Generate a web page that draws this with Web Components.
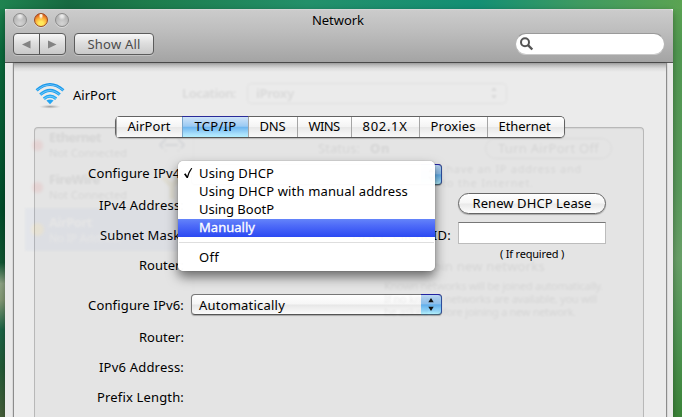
<!DOCTYPE html>
<html lang="en">
<head>
<meta charset="utf-8">
<title>Network</title>
<style>
html,body{margin:0;height:100%;overflow:hidden}
body{font:13px/18px "Noto Sans","Open Sans",sans-serif;color:#000}
</style>
</head>
<body>
<network-window></network-window>
<script>
const define=(name,html,setup)=>customElements.define(name,class extends HTMLElement{
  constructor(){super();const t=document.createElement('template');t.innerHTML=html;
    this.attachShadow({mode:'open'}).appendChild(t.content.cloneNode(true));}
  connectedCallback(){if(setup)setup(this,this.shadowRoot);}
});

/* Text run whose tracking is adjusted so that it fills the width w */
define('fit-text',`<style>:host{display:inline-block;white-space:pre;flex:none}span{display:inline-block}</style><span><slot></slot></span>`,(el,r)=>{
  const w=+el.getAttribute('w'),s=r.querySelector('span');
  el.style.width=w+'px';
  const nat=s.getBoundingClientRect().width,n=el.textContent.length;
  if(nat)s.style.letterSpacing=((w-nat)/n)+'px';
});

define('traffic-light',`<style>
:host{display:block;box-sizing:border-box;width:14px;height:14px;border-radius:50%;border:1px solid #8c8c8c;
background:radial-gradient(circle at 50% 18%,#e8e8e8 0 10%,transparent 35%),radial-gradient(circle at 50% 80%,#d4d4d4,#b2b2b2 75%);box-shadow:0 1px 0 #d8d8d8}
:host([on]){border-color:#9c4a20;background:radial-gradient(ellipse at 50% 12%,#fff3d5 0 10%,transparent 26%),radial-gradient(circle at 50% 80%,#ffe95c 0 18%,#fbb13a 50%,#d9521a 85%)}
</style>`);

define('tool-button',`<style>
:host{display:flex;box-sizing:border-box;height:22px;border:1px solid #5c5c5c;border-radius:4px;background:linear-gradient(#f7f7f7,#dedede 45%,#c9c9c9);box-shadow:0 1px 0 #c3c3c3;color:#4b4b4b;align-items:center;justify-content:center}
</style><slot></slot>`);

define('search-field',`<style>
:host{display:flex;align-items:center;box-sizing:border-box;width:150px;height:22px;border-radius:11px;background:#fff;border:1px solid #b4b4b4;border-top-color:#9a9a9a;border-bottom-color:#c9c9c9;padding-left:4px}
svg{display:block}</style><svg width="14" height="14" viewBox="0 0 14 14" fill="none" stroke="#555" stroke-width="2"><circle cx="5" cy="5.2" r="4"/><path d="M8 8.2L12.3 12.5" stroke-width="2.4"/></svg>`);

define('title-bar',`<style>
:host{display:block;box-sizing:border-box;height:54px;border-bottom:1px solid #555;border-radius:4px 4px 0 0;background:linear-gradient(#dadada,#cbcbcb 3%,#bebebe 40%,#a4a4a4);padding:0 8px}
.t{display:grid;grid-template-columns:80px 1fr 80px;height:22px;margin-bottom:2px;align-items:center}
.l{display:flex;gap:7px}
.n{text-align:center;text-shadow:0 1px 0 #ddd8;padding-right:2px}
.b{display:flex;height:22px}
.seg{width:53px}
.seg i{width:1px;height:20px;background:#555}
.seg b{flex:1;display:flex;justify-content:center}
.show{width:80px;margin-left:8px}
search-field{margin-left:auto}
</style>
<div class="t"><div class="l"><traffic-light></traffic-light><traffic-light on></traffic-light><traffic-light></traffic-light></div>
<div class="n"><fit-text w="52">Network</fit-text></div></div>
<div class="b"><tool-button class="seg"><b><svg width="9" height="9"><path d="M0 4.5L8.5 .5V8.5Z" fill="#838383"/></svg></b><i></i><b><svg width="9" height="9"><path d="M8.5 4.5L0 .5V8.5Z" fill="#838383"/></svg></b></tool-button>
<tool-button class="show"><fit-text w="53">Show All</fit-text></tool-button><search-field></search-field></div>`);

define('tab-item',`<style>
:host{display:flex;box-sizing:border-box;align-items:center;justify-content:center;border-left:1px solid #a5a5a5;height:20px;padding:0 1px 2px 0;background:linear-gradient(#fff,#f4f4f4 48%,#e8e8e8 52%,#f9f9f9)}
:host(:first-child){border-left:0;padding-right:0}
:host(:last-child){padding-right:3px}
:host([on]){border-left-color:#79a5ca;padding-right:0;background:linear-gradient(#cfe3f8,#9bcaf3 46%,#6fb6ef 52%,#a9e0fc 85%,#b4f0ff)}
</style><slot></slot>`);

define('tab-bar',`<style>
:host{display:grid;grid-template-columns:66px 66px 49px 54px 68px 68px 77px;box-sizing:border-box;width:450px;height:22px;border:1px solid #626262;border-bottom-color:#555;border-radius:5px;box-shadow:0 1px 1px #0003}
tab-item:first-child{border-radius:4px 0 0 4px}
tab-item:last-child{border-radius:0 4px 4px 0}
tab-item[on]{box-shadow:0 -1px 0 #2a2a98}
</style><tab-item><fit-text w="43">AirPort</fit-text></tab-item><tab-item on><fit-text w="42">TCP/IP</fit-text></tab-item><tab-item><fit-text w="26">DNS</fit-text></tab-item><tab-item><fit-text w="31">WINS</fit-text></tab-item><tab-item><fit-text w="45">802.1X</fit-text></tab-item><tab-item><fit-text w="45">Proxies</fit-text></tab-item><tab-item><fit-text w="52">Ethernet</fit-text></tab-item>`);

define('pop-up',`<style>
:host{display:flex;box-sizing:border-box;width:251px;height:21px;border-radius:4px;border:1px solid #777;border-bottom-color:#555;background:linear-gradient(#fff,#f6f6f6 48%,#e7e7e7 52%,#fbfbfb);box-shadow:0 1px 1px #0004;align-items:center;padding-left:7px}
.cap{margin:-1px -1px -1px auto;width:21px;height:21px;box-sizing:border-box;border:1px solid #3a78ad;border-left:0;border-top-color:#2222a0;border-right-color:#2f4f9d;border-bottom-color:#47647a;border-radius:0 4px 4px 0;background:linear-gradient(#bbd7f3,#8fc1ee 46%,#62aeea 52%,#8fd2f8 80%,#b5f4ff)}
svg{display:block;margin:3px 0 0 7px}
</style><slot></slot><span class="cap"><svg width="6" height="13"><path d="M3 0L5.7 4.3H.3ZM3 13L.3 8.7H5.7Z" fill="#111"/></svg></span>`);

define('push-button',`<style>
:host{display:flex;align-items:center;justify-content:center;box-sizing:border-box;width:148px;height:21px;border:1px solid #666;border-radius:11px;background:linear-gradient(#fff,#f6f6f6 48%,#e9e9e9 52%,#fdfdfd);box-shadow:0 1px 1px #0004}
</style><slot></slot>`);

define('text-input',`<style>:host{display:block;box-sizing:border-box;width:148px;height:22px;background:#fff;border:1px solid #bcbcbc;border-top-color:#777}</style>`);

define('menu-item',`<style>
:host{display:flex;box-sizing:border-box;height:18px;align-items:center;padding-bottom:2px}
:host(:last-child){padding-bottom:0}
:host([hot]){background:linear-gradient(#6484fa,#4f6cf8 35%,#2b49f2);color:#fff;-webkit-text-stroke:.3px #fff}
.c{width:21px;display:flex;justify-content:flex-end}.c svg{margin-right:6px;visibility:hidden}
:host([checked]) svg{visibility:visible}
</style><span class="c"><svg width="10" height="12"><path d="M1 7.2L2.5 6.2L4.2 9Q5.6 4.3 8.2 1L9.3 1.2Q6.2 5.5 4.9 11H3.7Z" fill="#000"/></svg></span><slot></slot>`);

define('drop-menu',`<style>
:host{display:block;box-sizing:border-box;width:257px;height:110px;padding:4px 0 5px;border-radius:5px;background:#fffffffb;box-shadow:0 0 1px #0008,0 6px 12px #0008}
hr{border:0;height:1px;background:#dedede;margin:5px 1px}
</style>
<menu-item checked><fit-text w="75">Using DHCP</fit-text></menu-item><menu-item><fit-text w="209">Using DHCP with manual address</fit-text></menu-item><menu-item><fit-text w="75">Using BootP</fit-text></menu-item><menu-item hot><fit-text w="56">Manually</fit-text></menu-item><hr><menu-item><fit-text w="20">Off</fit-text></menu-item>`);

/* Parent pane showing faintly through the sheet */
define('ghost-pane',`<style>
:host{display:block;width:652px;height:354px;color:#000;opacity:.065;filter:blur(.8px)}
.loc{display:flex;align-items:center;padding:19px 0 0 168px;gap:11px;height:22px}
.pop{display:flex;align-items:center;justify-content:space-between;box-sizing:border-box;width:260px;height:21px;border:1px solid #555;border-radius:4px;padding:0 9px 0 8px}
.cols{display:flex;margin-top:20px}
.side{width:168px;margin-left:11px;border-right:1px solid #8884}
.svc{display:grid;grid-template-columns:24px 1fr 34px;height:42px;align-items:center;line-height:15px}
.svc small{font-size:11px;display:block;font-weight:400}
.svc i{width:9px;height:9px;border-radius:50%;background:#e00;margin-left:8px;box-shadow:0 0 2px 2px #e008}
.svc.sel{background:#1548c988;color:#fff;height:43px}.svc.sel i{background:#fb0;box-shadow:0 0 2px 2px #fb0}
.st{flex:1;padding:13px 0 0 110px}
.row{display:flex;height:22px;align-items:center;margin-left:14px}
.btn{box-sizing:border-box;border:1px solid #555;border-radius:11px;height:21px;width:127px;display:flex;align-items:center;justify-content:center;margin-left:95px}
.p{font-size:11px;line-height:14px;margin:3px 0 0 43px;white-space:nowrap}
.known{margin:67px 0 0 83px;line-height:18px}
.notes{font-size:11px;line-height:13px;margin:4px 0 0 80px;white-space:nowrap}
.p fit-text,.notes fit-text{display:block}
</style>
<div class="loc"><b><fit-text w="54">Location:</fit-text></b><div class="pop"><b><fit-text w="38">iProxy</fit-text></b><svg width="6" height="12"><path d="M3 0L6 4H0ZM3 12L0 8H6Z"/></svg></div></div>
<div class="cols"><div class="side">
<div class="svc"><i></i><b><fit-text w="52">Ethernet</fit-text><small><fit-text w="78">Not Connected</fit-text></small></b><svg width="26" height="16" fill="none" stroke="#124" stroke-width="2"><path d="M7 2L1 8L7 14M19 2L25 8L19 14M6 8H20" stroke-dasharray="13 3"/></svg></div>
<div class="svc"><i></i><b><fit-text w="51">FireWire</fit-text><small><fit-text w="78">Not Connected</fit-text></small></b><svg width="26" height="30" fill="none" stroke="#a80" stroke-width="5"><path d="M4 5L13 14L21 5M13 14V27"/></svg></div>
<div class="svc sel"><i></i><b><fit-text w="43">AirPort</fit-text><small><fit-text w="72">No IP Address</fit-text></small></b></div>
</div><div class="st">
<div class="row"><fit-text w="42">Status:</fit-text><b style="margin-left:10px"><fit-text w="20">On</fit-text></b><span class="btn"><fit-text w="101">Turn AirPort Off</fit-text></span></div>
<div class="p"><fit-text w="235">AirPort does not have an IP address and</fit-text><fit-text w="187">cannot connect to the Internet.</fit-text></div>
<div class="known"><fit-text w="158">Ask to join new networks</fit-text></div>
<div class="notes"><fit-text w="219">Known networks will be joined automatically.</fit-text><fit-text w="213">If no known networks are available, you will</fit-text><fit-text w="192">be asked before joining a new network.</fit-text></div>
</div></div>`);

define('airport-icon',`<style>:host{display:block;width:30px;height:28px}</style>
<svg width="30" height="28" viewBox="0 0 30 28"><defs><linearGradient id="g" x1="0" y1="0" x2="0" y2="22" gradientUnits="userSpaceOnUse"><stop stop-color="#1793e8"/><stop offset="1" stop-color="#2ab3f8"/></linearGradient><radialGradient id="s"><stop stop-color="#777" stop-opacity=".7"/><stop offset="1" stop-color="#aaa" stop-opacity="0"/></radialGradient></defs>
<ellipse cx="15" cy="24.7" rx="11" ry="2" fill="url(#s)"/>
<g fill="none" stroke="url(#g)" stroke-width="3.1"><path d="M1.6 8.3Q15-3.3 28.4 8.3M5.2 12.6Q15 4.1 24.8 12.6M8.8 16.7Q15 11.5 21.2 16.7"/></g><path d="M11.4 18.6Q15 16.4 18.6 18.6L15 22.2Z" fill="#22a5f3"/>
<g fill="none" stroke="#a5deff" stroke-opacity=".75" stroke-width=".8"><path d="M1.8 8.2Q15-3 28.2 8.2M5.4 12.6Q15 4.4 24.6 12.6M9 16.7Q15 11.9 21 16.7"/></g></svg>`);

define('settings-form',`<style>
:host{display:grid;grid-template-columns:150px 7px 251px 1fr;grid-template-rows:30px 30px 30px 30px 10px 30px 2px 30px 30px 30px;align-items:center}
.l{grid-column:1;justify-self:end;padding-top:2px}
.l.first{padding:0 0 2px}
.v{grid-column:3}
pop-up fit-text{padding-top:1px}
.r{grid-column:4;display:flex;align-items:center}
.r push-button,.r text-input{margin-left:16px}
.cid{margin-left:-90px;width:99px;text-align:right;padding-top:2px}
.r .cid+text-input{margin-left:7px}
.note{grid-column:4;font-size:11px;line-height:14px;align-self:start;margin:-2px 0 0 58px}
</style>
<fit-text class="l first" style="grid-row:1" w="96">Configure IPv4:</fit-text><pop-up class="v" style="grid-row:1"></pop-up>
<fit-text class="l" style="grid-row:2" w="85">IPv4 Address:</fit-text><span class="r" style="grid-row:2"><push-button style="margin-top:-2px"><fit-text w="119">Renew DHCP Lease</fit-text></push-button></span>
<fit-text class="l" style="grid-row:3" w="84">Subnet Mask:</fit-text><span class="r" style="grid-row:3"><span class="cid"><fit-text w="99">DHCP Client ID:</fit-text></span><text-input style="margin-top:-2px"></text-input></span>
<fit-text class="l" style="grid-row:4" w="45">Router:</fit-text><span class="note" style="grid-row:4"><fit-text w="64">( If required )</fit-text></span>
<fit-text class="l" style="grid-row:6" w="96">Configure IPv6:</fit-text><pop-up class="v" style="grid-row:6;margin-top:1px"><fit-text w="86">Automatically</fit-text></pop-up>
<fit-text class="l" style="grid-row:8" w="45">Router:</fit-text>
<fit-text class="l" style="grid-row:9" w="85">IPv6 Address:</fit-text>
<fit-text class="l" style="grid-row:10" w="87">Prefix Length:</fit-text>`);

define('network-sheet',`<style>
:host{display:block;position:relative;box-sizing:border-box;margin:0 7px 0 9px;height:354px;background:#ebebeb;box-shadow:-1px 0 1px #0006,1px 0 1px #0006}
.ghost{position:absolute;inset:0;z-index:1;overflow:hidden;pointer-events:none}
.shade{position:absolute;left:0;right:0;top:0;height:9px;background:linear-gradient(#9c9c9c,#bcbcbc 25%,#dcdcdc 60%,#ebebeb00);z-index:2}
.head{display:flex;gap:8px;height:53px;box-sizing:border-box;padding:19px 0 0 21px}
.head fit-text{margin-top:4px}
tab-bar{position:relative;z-index:3;margin-left:101px}
.box{box-sizing:border-box;margin:-11px 22px 0 20px;height:310px;border:1px solid #b8b8b8;border-bottom:0;border-radius:4px 4px 0 0;background:#e4e4e4;box-shadow:inset 0 1px 1px #0001;padding-top:31px}
settings-form{margin-left:-1px}
drop-menu{position:absolute;left:164px;top:98px;z-index:5}
</style><div class="shade"></div><div class="head"><airport-icon></airport-icon><fit-text w="43">AirPort</fit-text></div>
<tab-bar></tab-bar><div class="box"><settings-form></settings-form></div><div class="ghost"><ghost-pane></ghost-pane></div><drop-menu></drop-menu>`);

define('network-window',`<style>
:host{display:block;box-sizing:border-box;width:682px;height:417px;overflow:hidden;padding:9px 9px 0 5px;
background:
linear-gradient(90deg,#1f8350,#176a41 10%,#1d7c4c 22%,#23906a 45%,#138f74 70%,#3e9a61 85%,#5ba352) 0 0/100% 9px no-repeat,
linear-gradient(#1f8350,#0b6a3c 12%,#004c29 50%,#115632 63%,#8da283 68%,#829874 72%,#1b6546 79%,#225a36 88%,#465f3a) 0 0/5px 100% no-repeat,
linear-gradient(#5ba352,#509750 12%,#58985a 45%,#689f67 62%,#4f9453 80%,#3b8338) 100% 0/9px 100% no-repeat}
.w{height:408px;border-radius:5px 5px 0 0;background:#e9e9e9;box-shadow:0 2px 6px #0005}
</style><div class="w"><title-bar></title-bar><network-sheet></network-sheet></div>`);
</script>
</body>
</html>
